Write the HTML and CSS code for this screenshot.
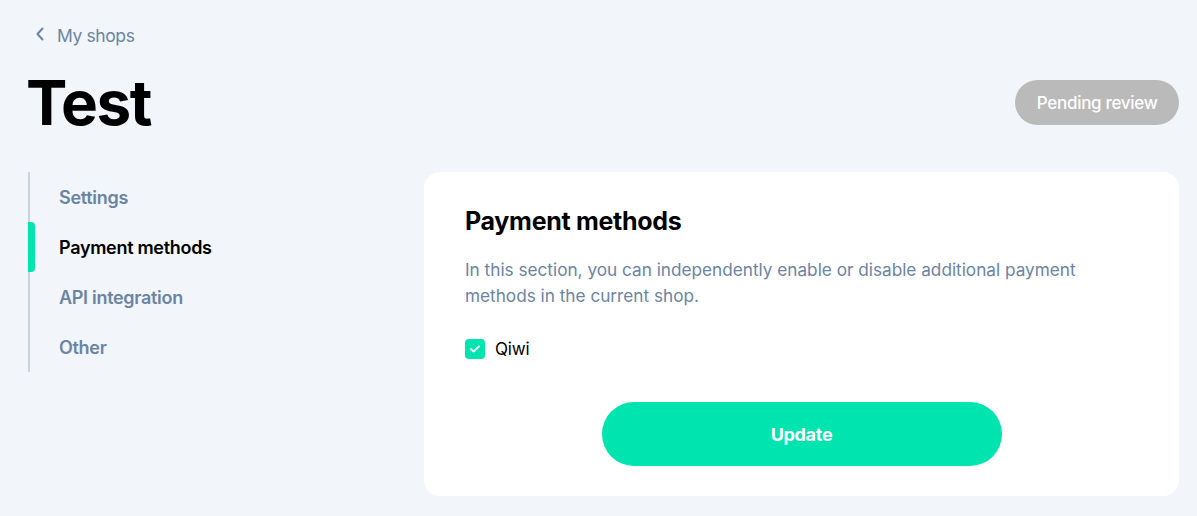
FILE: index.html
```html
<!DOCTYPE html>
<html>
<head>
<meta charset="utf-8">
<link rel="stylesheet" href="styles.css">
</head>
<body>
<div class="page">
  <a class="back" href="#">
    <svg class="chev" width="10" height="14" viewBox="0 0 10 14"><path d="M7.5 1.5 L2.5 7 L7.5 12.5" fill="none" stroke="#6b84a6" stroke-width="2" stroke-linecap="round" stroke-linejoin="round"/></svg>
    <span>My shops</span>
  </a>
  <div class="header">
    <h1 class="title">Test</h1>
    <div class="badge">Pending review</div>
  </div>
  <div class="main">
    <nav class="side">
      <a class="nav-item" href="#">Settings</a>
      <a class="nav-item active" href="#">Payment methods</a>
      <a class="nav-item" href="#">API integration</a>
      <a class="nav-item" href="#">Other</a>
    </nav>
    <section class="card">
      <h2 class="card-title">Payment methods</h2>
      <p class="desc">In this section, you can independently enable or disable additional payment methods in the current shop.</p>
      <label class="check">
        <span class="box"><svg width="12" height="10" viewBox="0 0 12 10"><path d="M2 5.2 L4.6 7.6 L10 2.4" fill="none" stroke="#fff" stroke-width="2" stroke-linecap="round" stroke-linejoin="round"/></svg></span>
        <span>Qiwi</span>
      </label>
      <div class="actions"><button class="btn">Update</button></div>
    </section>
  </div>
</div>
</body>
</html>
```
FILE: styles.css
```css
* { box-sizing: border-box; }
html, body { margin: 0; padding: 0; }
body {
  background: #f2f6fa;
  font-family: "Inter", "Noto Sans", sans-serif;
  color: #000;
}
.page {
  padding: 20px 18px 0 28px;
}
.back {
  display: flex;
  align-items: center;
  gap: 12px;
  text-decoration: none;
  color: #6b84a6;
  font-size: 17.5px;
  height: 30px;
  margin-left: 7px;
  letter-spacing: -0.4px;
}
.chev { margin-top: -2px; }
.header {
  display: flex;
  justify-content: space-between;
  align-items: center;
  margin-top: 26px;
  height: 54px;
}
.title {
  margin: 0 0 0 -2px;
  font-size: 62px;
  font-weight: 700;
  letter-spacing: -1.5px;
  line-height: 1;
}
.badge {
  background: #bababa;
  color: #fff;
  font-size: 17px;
  font-weight: 500;
  height: 45px;
  padding: 0 21.5px;
  border-radius: 23px;
  display: flex;
  align-items: center;
  letter-spacing: -0.3px;
  margin-top: -1px;
}
.main {
  display: flex;
  margin-top: 42px;
}
.side {
  width: 396px;
  flex: none;
  border-left: 2px solid #c9d3e0;
  align-self: flex-start;
  display: flex;
  flex-direction: column;
}
.nav-item {
  position: relative;
  height: 50px;
  display: flex;
  align-items: center;
  padding-left: 29px;
  font-size: 18px;
  font-weight: 600;
  color: #6b84a6;
  text-decoration: none;
  letter-spacing: -0.3px;
}
.nav-item.active { color: #000; }
.nav-item.active::before {
  content: "";
  position: absolute;
  left: -2px;
  top: 0;
  width: 7px;
  height: 50px;
  background: #00e4b0;
  border-radius: 0 4px 4px 0;
}
.card {
  flex: 1;
  background: #fff;
  border-radius: 16px;
  padding: 34px 41px 30px 41px;
}
.card-title {
  margin: 0;
  font-size: 25px;
  font-weight: 700;
  letter-spacing: -0.3px;
  line-height: 30px;
}
.desc {
  margin: 21px 0 0;
  font-size: 17.2px;
  line-height: 26px;
  color: #6b84a6;
  max-width: 640px;
  letter-spacing: 0;
}
.check {
  display: flex;
  align-items: center;
  gap: 10px;
  margin-top: 30px;
  font-size: 17px;
  letter-spacing: -0.2px;
}
.box {
  width: 20px;
  height: 20px;
  border-radius: 4px;
  background: #00e4b0;
  display: flex;
  align-items: center;
  justify-content: center;
}
.actions {
  display: flex;
  justify-content: center;
  margin-top: 43px;
}
.btn {
  width: 400px;
  height: 64px;
  border: none;
  border-radius: 32px;
  background: #00e4b0;
  color: #fff;
  font-family: inherit;
  font-size: 18px;
  font-weight: 700;
  letter-spacing: -0.3px;
}
```
